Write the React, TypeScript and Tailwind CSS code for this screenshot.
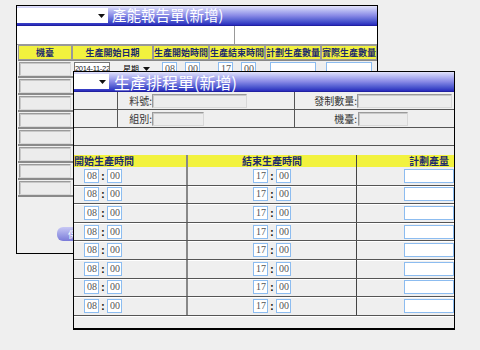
import React from "react";

const cjk = "font-['Noto_Sans_CJK_TC','Noto_Sans_CJK_SC',sans-serif]";

function Arrow() {
  return (
    <svg width="7" height="4" viewBox="0 0 7 4" className="shrink-0">
      <path d="M0 0h7L3.5 4z" fill="#111" />
    </svg>
  );
}

function TimeBox({ v }: { v: string }) {
  return (
    <span className="inline-flex w-[15px] h-[14px] bg-white border border-[#8cbcf0] text-[10px] leading-none items-center pl-[2px] text-[#555] font-['Liberation_Serif',serif]">
      {v}
    </span>
  );
}

function TimePair({ h, sep = ":" }: { h: string; sep?: string }) {
  return (
    <div className="flex items-center gap-[1px]">
      <TimeBox v={h} />
      <span className="w-[6px] text-center text-[10px] font-bold leading-none text-black">{sep}</span>
      <TimeBox v="00" />
    </div>
  );
}

function GrayInput({ w }: { w: string }) {
  return <div className={`${w} h-[14px] bg-[#ececec] border border-[#9a9a9a] border-r-[#d8d8d8] border-b-[#d8d8d8] shadow-[inset_1px_1px_0_#c8c8c8]`} />;
}

const titleBar = "bg-gradient-to-b from-[#e2e2fa] via-[#8a8ae6] to-[#2a2abd]";

function BackWindow() {
  const heads = ["機臺", "生產開始日期", "生產開始時間", "生產結束時間", "計劃生產數量", "實際生產數量"];
  const widths = ["w-[54px]", "w-[81px]", "w-[56px]", "w-[56px]", "w-[56px]", "w-[56px]"];
  return (
    <div className="absolute left-[16px] top-[5px] w-[362px] h-[249px] border border-black bg-[#efefef] flex flex-col">
      <div className={`h-[20px] ${titleBar} flex items-center border-b border-[#2020a0]`}>
        <div className="w-[91px] h-[15px] bg-white flex items-center justify-end pr-[3px]">
          <Arrow />
        </div>
        <span className={`ml-[4px] text-white text-[14.5px] leading-none ${cjk}`}>產能報告單(新增)</span>
      </div>
      <div className="h-[19px] bg-white flex border-b border-[#999]">
        <div className="w-[218px] border-r border-[#999]" />
      </div>
      <div className="flex ml-[1px] h-[16px] border-b border-[#888]">
        {heads.map((t, i) => (
          <div key={t} className={`${widths[i]} bg-[#f2f23e] border border-[#999] flex items-center justify-center text-[9px] font-bold text-[#1c2a6c] leading-none whitespace-nowrap ${cjk}`}>
            {t}
          </div>
        ))}
      </div>
      {Array.from({ length: 8 }).map((_, r) => (
        <div key={r} className="flex ml-[1px] h-[17px] items-center border-b-2 border-[#8a8a8a]">
          <div className="w-[54px] h-full flex items-center px-[1px]">
            <GrayInput w="w-full" />
          </div>
          {r === 0 && (
            <>
              <div className="w-[81px] flex items-center gap-[13px] pl-[2px]">
                <span className="w-[36px] h-[13px] border border-[#777] bg-white text-[7.5px] tracking-[-0.3px] leading-none flex items-center whitespace-nowrap overflow-hidden font-['Liberation_Sans',sans-serif] text-[#222]">2014-11-22</span>
                <span className={`flex items-center gap-[4px] text-[8px] leading-none ${cjk}`}>星期<Arrow /></span>
              </div>
              <div className="w-[56px] flex justify-center"><TimePair h="08" sep="." /></div>
              <div className="w-[56px] flex justify-center"><TimePair h="17" sep="." /></div>
              <div className="w-[56px] flex justify-center"><span className="w-[46px] h-[13px] bg-white border border-[#8cbcf0]" /></div>
              <div className="w-[56px] flex justify-center"><span className="w-[46px] h-[13px] bg-white border border-[#8cbcf0]" /></div>
            </>
          )}
        </div>
      ))}
      <div className="flex-1 flex items-end pb-[12px] pl-[40px]">
        <button className={`w-[40px] h-[14px] rounded-[6px] bg-gradient-to-b from-[#c8c8f4] to-[#7a7ad8] text-white text-[9px] leading-none ${cjk}`}>保存</button>
      </div>
    </div>
  );
}

function FrontWindow() {
  return (
    <div className="absolute left-[73px] top-[71px] w-[382px] h-[259px] border border-black border-b-2 bg-[#efefef] flex flex-col">
      <div className={`h-[20px] ${titleBar} flex items-center border-b border-[#2020a0]`}>
        <div className="w-[35px] h-[15px] bg-white flex items-center justify-end pr-[3px]">
          <Arrow />
        </div>
        <span className={`ml-[5px] text-white text-[16px] leading-none ${cjk}`}>生產排程單(新增)</span>
      </div>
      <div className={`flex h-[18px] border-b border-[#555] text-[10px] text-[#333] leading-none ${cjk}`}>
        <div className="w-[44px] border-r border-[#555]" />
        <div className="w-[34px] flex items-center justify-end">料號:</div>
        <div className="w-[143px] flex items-center border-r border-[#555]"><GrayInput w="w-[95px]" /></div>
        <div className="w-[62px] flex items-center justify-end">發制數量:</div>
        <div className="flex-1 flex items-center"><GrayInput w="w-[95px]" /></div>
      </div>
      <div className={`flex h-[18px] border-b border-[#555] text-[10px] text-[#333] leading-none ${cjk}`}>
        <div className="w-[44px] border-r border-[#555]" />
        <div className="w-[34px] flex items-center justify-end">組別:</div>
        <div className="w-[143px] flex items-center border-r border-[#555]"><GrayInput w="w-[52px]" /></div>
        <div className="w-[62px] flex items-center justify-end">機臺:</div>
        <div className="flex-1 flex items-center pl-[1px]"><GrayInput w="w-[50px]" /></div>
      </div>
      <div className="h-[18px] border-b border-[#555]" />
      <div className="h-[9px]" />
      <div className={`flex h-[12px] bg-[#f2f23e] text-[10px] font-bold text-[#1c2a6c] leading-none ${cjk}`}>
        <div className="w-[114px] flex items-center border-r-2 border-[#888]">開始生產時間</div>
        <div className="w-[169px] flex items-center justify-center border-r border-[#444]">結束生產時間</div>
        <div className="flex-1 flex items-center justify-end pr-[5px]">計劃產量</div>
      </div>
      {Array.from({ length: 8 }).map((_, r) => (
        <div key={r} className="flex h-[18.6px] border-b border-[#555] shadow-[0_1px_0_#fff]">
          <div className="w-[114px] flex items-center pl-[10px] border-r-2 border-[#888]"><TimePair h="08" /></div>
          <div className="w-[169px] flex items-center justify-center border-r border-[#444]"><TimePair h="17" /></div>
          <div className="flex-1 flex items-center justify-end"><span className="w-[50px] h-[14px] bg-white border border-[#8cbcf0]" /></div>
        </div>
      ))}
    </div>
  );
}

export default function App() {
  return (
    <div className="relative w-[480px] h-[350px] bg-[#efefef] overflow-hidden">
      <BackWindow />
      <FrontWindow />
    </div>
  );
}
